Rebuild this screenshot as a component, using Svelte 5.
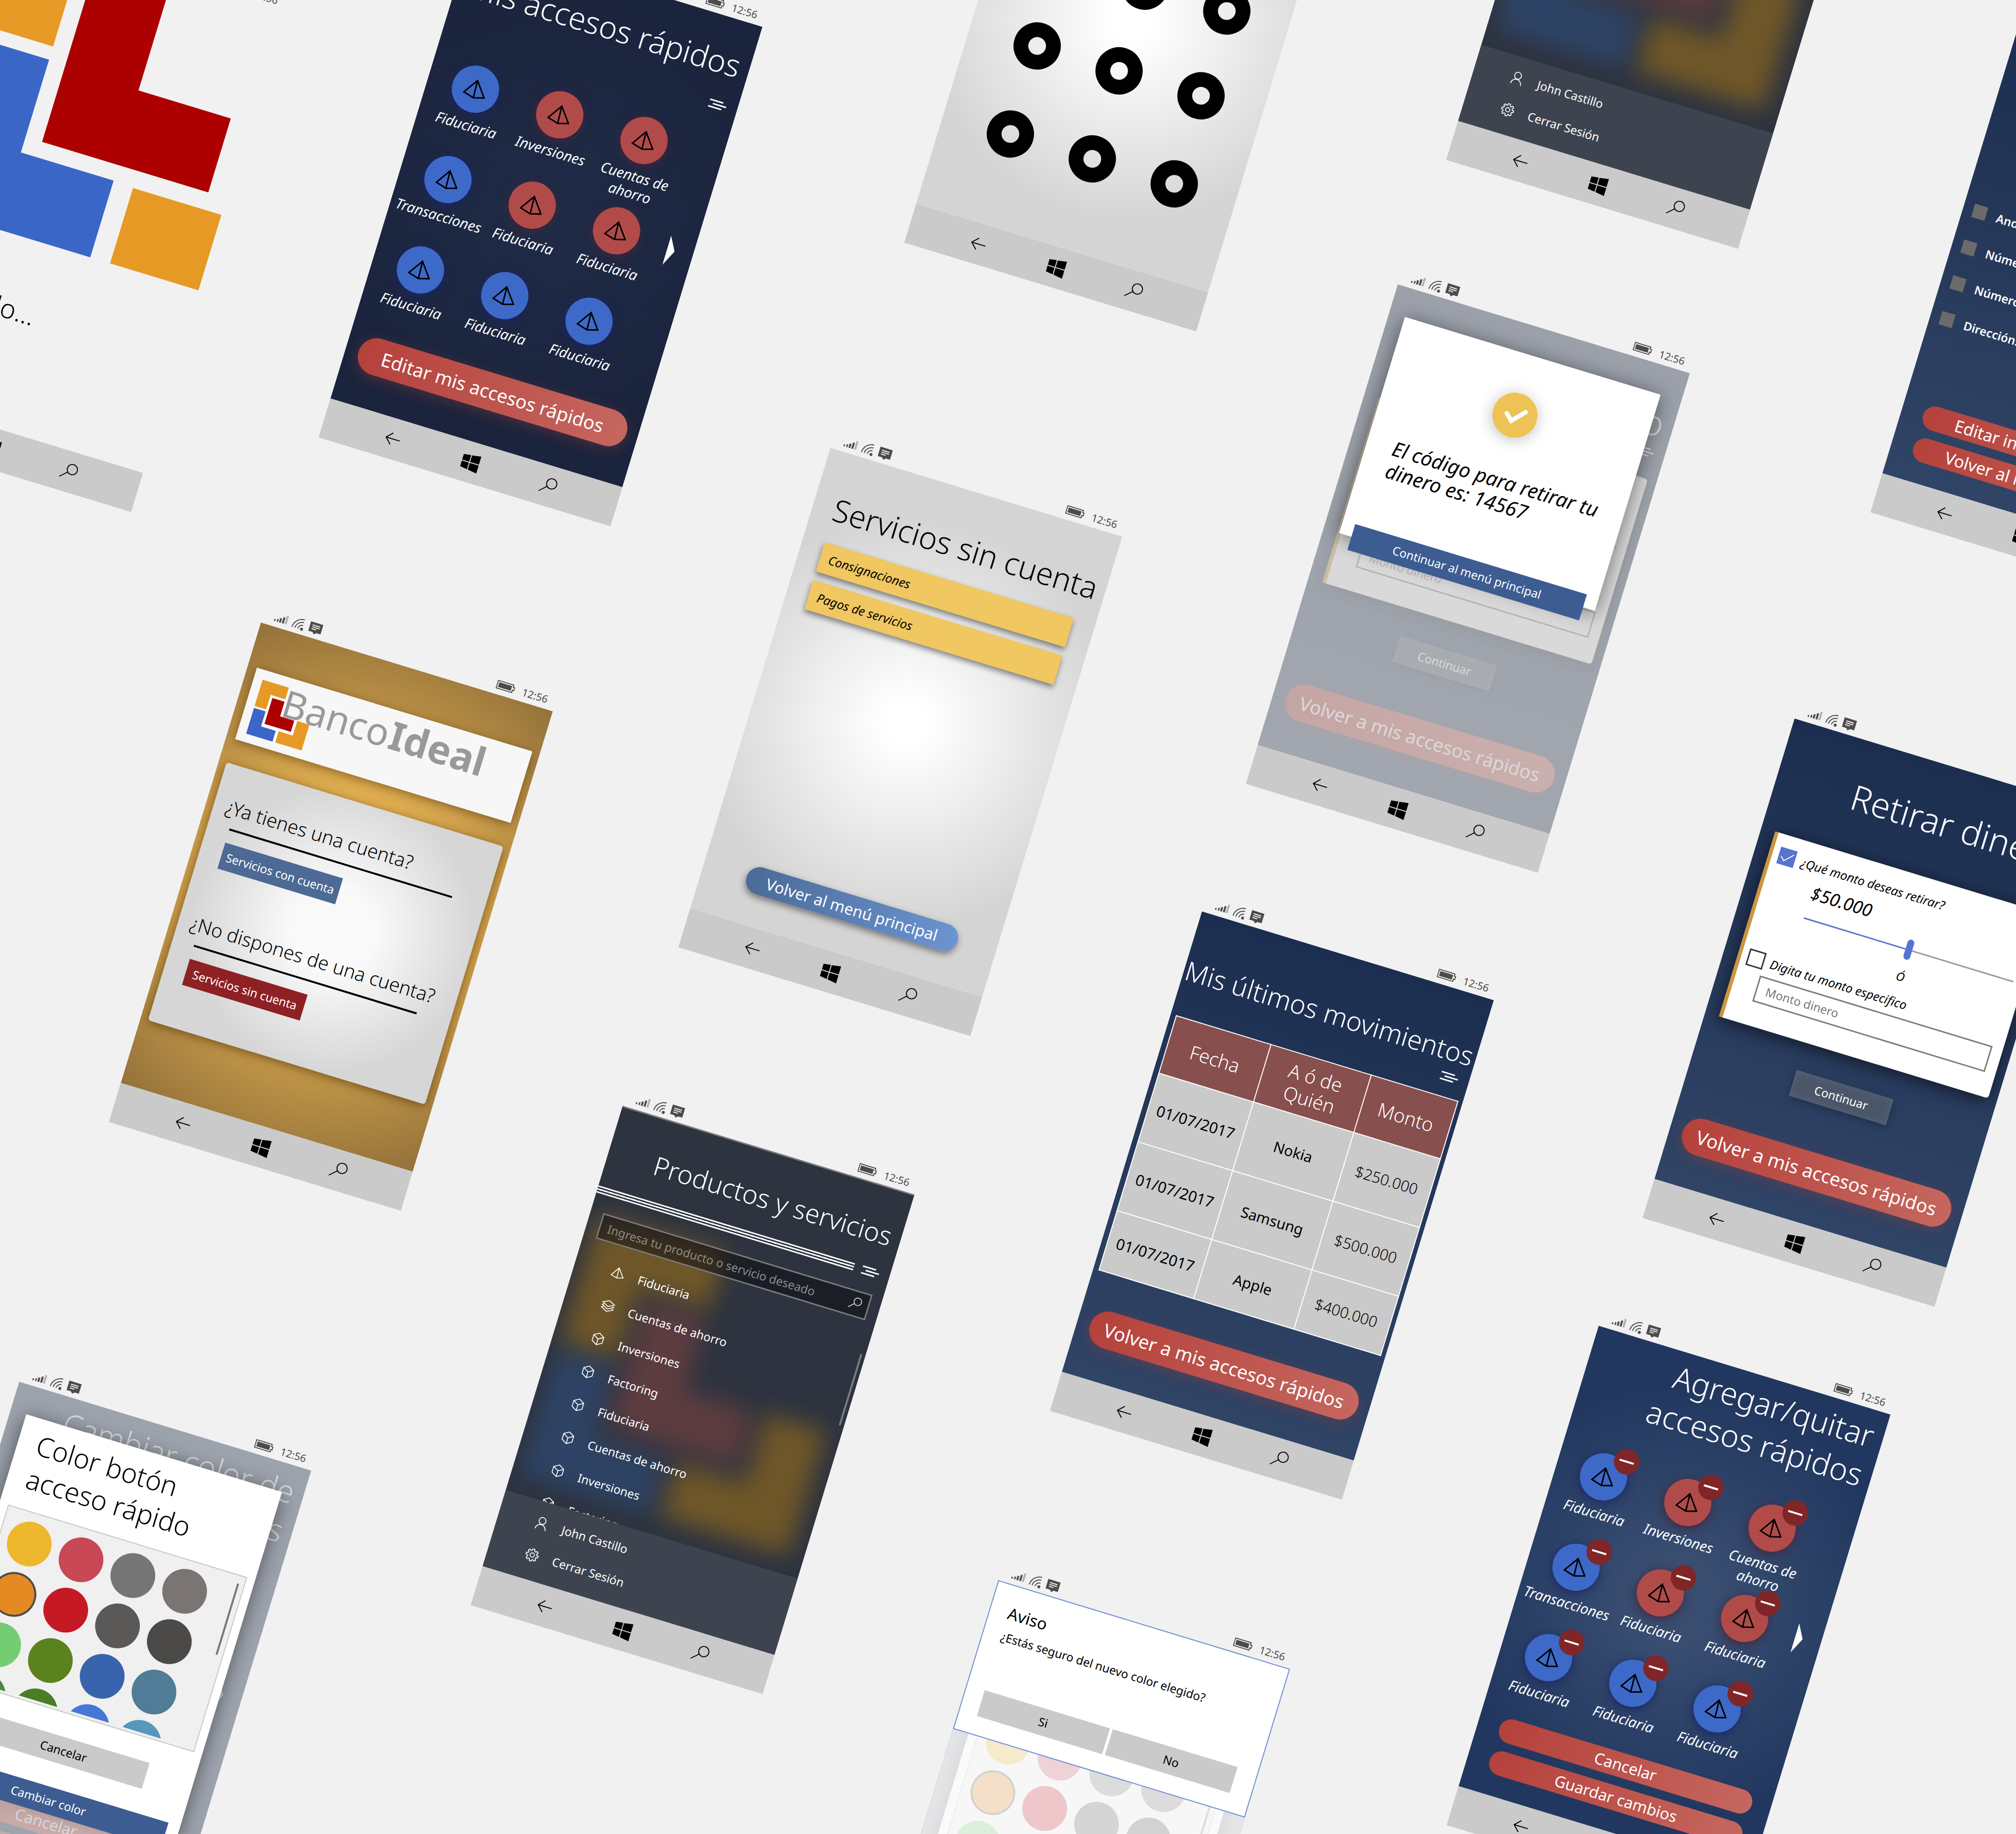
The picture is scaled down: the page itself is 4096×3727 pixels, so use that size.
<script>
  const phones = [
    { kind: 'loading', x: -18, y: -196 },
    { kind: 'shortcuts', x: 956, y: -167 },
    { kind: 'pattern', x: 2146, y: -563 },
    { kind: 'menu', x: 3247, y: -731, items: 5 },
    { kind: 'profile', x: 4109, y: -15 },
    { kind: 'code', x: 2840, y: 537 },
    { kind: 'services', x: 1687, y: 869 },
    { kind: 'home', x: 530, y: 1224 },
    { kind: 'withdraw', x: 3646, y: 1419 },
    { kind: 'movements', x: 2442, y: 1811 },
    { kind: 'menu', x: 1265, y: 2206, items: 8 },
    { kind: 'edit', x: 3248, y: 2653 },
    { kind: 'color', x: 39, y: 2767 },
    { kind: 'confirm', x: 2028, y: 3170 }
  ];

  const shortcuts = [
    { label: 'Fiduciaria', tone: 'blue' },
    { label: 'Inversiones', tone: 'red' },
    { label: 'Cuentas de\nahorro', tone: 'red' },
    { label: 'Transacciones', tone: 'blue' },
    { label: 'Fiduciaria', tone: 'red' },
    { label: 'Fiduciaria', tone: 'red' },
    { label: 'Fiduciaria', tone: 'blue' },
    { label: 'Fiduciaria', tone: 'blue' },
    { label: 'Fiduciaria', tone: 'blue' }
  ];

  const products = [
    { label: 'Fiduciaria', icon: 'pyramid' },
    { label: 'Cuentas de ahorro', icon: 'layers' },
    { label: 'Inversiones', icon: 'cube' },
    { label: 'Factoring', icon: 'cube' },
    { label: 'Fiduciaria', icon: 'cube' },
    { label: 'Cuentas de ahorro', icon: 'cube' },
    { label: 'Inversiones', icon: 'cube' },
    { label: 'Factoring', icon: 'cube' }
  ];

  const movements = [
    ['01/07/2017', 'Nokia', '$250.000'],
    ['01/07/2017', 'Samsung', '$500.000'],
    ['01/07/2017', 'Apple', '$400.000']
  ];

  const swatches = [
    '#edb82d', '#c84856', '#757575', '#7a7472',
    '#e58a22', '#c61926', '#5a5957', '#4c4a48',
    '#74cd72', '#5c821e', '#3864ad', '#507c97',
    '#4a8745', '#4a7d25', '#4577d6', '#5698ba'
  ];

  const profileFields = ['Andrés Castillo', 'Número de cuenta:', 'Número celular:', 'Dirección:'];
</script>

{#snippet logo(cls)}
  <svg class={cls} viewBox="0 0 118 115" preserveAspectRatio="none" aria-hidden="true">
    <path class="l-orange" d="M0 0H56V25H25V56H0Z" />
    <path class="l-blue" d="M0 60H25V92H56V115H0Z" />
    <path class="l-orange" d="M92 60H118V115H62V91H92Z" />
    <path class="l-edge" d="M25 25H61V56H91V90H25Z" />
    <path class="l-red" d="M30 30H56V61H86V85H30Z" />
  </svg>
{/snippet}

{#snippet pyramid(cls)}
  <svg class={cls} viewBox="0 0 48 48" fill="none" stroke="currentColor" stroke-width="3" aria-hidden="true">
    <path d="M23 6L3 36L25 42L46 36Z M23 6L25 42" />
  </svg>
{/snippet}

{#snippet hamburger()}
  <button class="hamburger" aria-label="Menú"><span></span><span></span><span></span></button>
{/snippet}

{#snippet lens(cls)}
  <svg class={cls} viewBox="0 0 40 40" fill="none" stroke="currentColor" stroke-width="2" aria-hidden="true">
    <circle cx="26" cy="13" r="11" /><path d="M18 21L3 35" />
  </svg>
{/snippet}

{#snippet shortcutGrid(editable)}
  <div class="pager">
    <ul class="shortcuts">
      {#each shortcuts as s}
        <li>
          <button class="tile {s.tone}" aria-label={s.label}>
            {@render pyramid('tile-icon')}
            {#if editable}<span class="badge"></span>{/if}
          </button>
          <span class="tile-label">{s.label}</span>
        </li>
      {/each}
    </ul>
    <svg class="next" viewBox="0 0 16 62" aria-hidden="true"><path fill="#fff" d="M0 0L16 29L0 62Z" /></svg>
  </div>
{/snippet}

{#snippet withdrawScreen()}
  <div class="screen navy">
    <h2 class="title huge">Retirar dinero</h2>
    <div class="menu-row near">{@render hamburger()}</div>
    <form class="money-card">
      <label class="option"><input type="checkbox" checked />¿Qué monto deseas retirar?</label>
      <div class="amount">$50.000</div>
      <input class="range" type="range" aria-label="Monto" min="0" max="100" value="50" />
      <div class="or">Ó</div>
      <label class="option"><input type="checkbox" />Digita tu monto especifico</label>
      <input class="money" type="text" placeholder="Monto dinero" aria-label="Monto dinero" />
    </form>
    <button class="glass">Continuar</button>
    <button class="pill big">Volver a mis accesos rápidos</button>
  </div>
{/snippet}

{#snippet colorScreen()}
  <div class="screen edit-bg">
    <h2 class="title two">Cambiar color de<br />accesos rápidos</h2>
    {@render shortcutGrid(false)}
    <div class="pill-stack">
      <button class="pill slim">Cancelar</button>
      <button class="pill slim">Guardar cambios</button>
    </div>
  </div>
  <div class="veil"></div>
  <div class="dialog">
    <h3 class="dialog-title">Color botón<br />acceso rápido</h3>
    <div class="palette">
      <div class="swatches">
        {#each swatches as c, i}
          <button class="swatch" class:chosen={i === 4} style="background:{c}" aria-label="Color {i + 1}"></button>
        {/each}
      </div>
      <span class="palette-bar"></span>
    </div>
    <button class="flat gray">Cancelar</button>
    <button class="flat royal">Cambiar color</button>
  </div>
{/snippet}

<main class="board">
  {#each phones as p}
    <section class="phone" style="left:{p.x}px;top:{p.y}px">
      <header class="status">
        <svg class="signal" viewBox="0 0 28 18" aria-hidden="true">
          <path fill="#4b4b4b" d="M0 14h3v4h-3zM6 12h3v6h-3zM11 9h4v9h-4zM17 5h4v13h-4z" /><path fill="#b0b0b0" d="M23 0h4v18h-4z" />
        </svg>
        <svg class="wifi" viewBox="0 0 26 26" fill="none" stroke="#4b4b4b" stroke-width="2" aria-hidden="true">
          <path d="M2 23A21 21 0 0 1 23 2M8 23A15 15 0 0 1 23 8M14 23A9 9 0 0 1 23 14" /><circle cx="22" cy="22" r="2" fill="#4b4b4b" />
        </svg>
        <svg class="note" viewBox="0 0 28 26" aria-hidden="true">
          <path fill="#4b4b4b" d="M1 1H27V21H18L14 25L10 21H1Z" /><path stroke="#f1f1f1" stroke-width="2" d="M6 7H22M6 11H22M6 15H16" />
        </svg>
        <span class="spring"></span>
        <svg class="battery" viewBox="0 0 38 18" aria-hidden="true">
          <path fill="none" stroke="#4b4b4b" stroke-width="2" d="M1 1H34V6H37V12H34V17H1Z" /><path fill="#4b4b4b" d="M4 4H31V14H4Z" />
        </svg>
        <time>12:56</time>
      </header>

      <div class="body">
        {#if p.kind === 'loading'}
          <div class="screen blank">
            <svg class="giant-logo" viewBox="0 0 620 640" aria-hidden="true">
              <path class="l-orange" d="M36 0H193V202H36Z" />
              <path class="l-blue" d="M36 230H193V427H390V590H36Z" />
              <path class="l-red" d="M228 40H385V237H581V394H228Z" />
              <path class="l-orange" d="M432 430H620V590H432Z" />
            </svg>
            <p class="loading">Cargando...</p>
          </div>
        {:else if p.kind === 'shortcuts'}
          <div class="screen night">
            <h2 class="title one">Mis accesos rápidos</h2>
            <div class="menu-row far">{@render hamburger()}</div>
            {@render shortcutGrid(false)}
            <button class="pill big">Editar mis accesos rápidos</button>
          </div>
        {:else if p.kind === 'pattern'}
          <div class="screen pearl">
            <div class="rings">
              {#each Array(9) as _, i}<button class="ring" aria-label="Punto {i + 1}"></button>{/each}
            </div>
          </div>
        {:else if p.kind === 'menu'}
          <div class="screen slate">
            {@render logo('ghost')}
            <h2 class="title products">Productos y servicios</h2>
            <div class="rule-row"><div class="rules"></div>{@render hamburger()}</div>
            <label class="search">
              <input type="text" placeholder="Ingresa tu producto o servicio deseado" aria-label="Ingresa tu producto o servicio deseado" />
              {@render lens('search-icon')}
            </label>
            <div class="list-wrap">
              <ul class="list">
                {#each products.slice(0, p.items) as item}
                  <li>
                    {#if item.icon === 'pyramid'}
                      {@render pyramid('list-icon')}
                    {:else if item.icon === 'layers'}
                      <svg class="list-icon" viewBox="0 0 32 32" fill="none" stroke="currentColor" stroke-width="2" aria-hidden="true">
                        <path d="M16 3L30 10L16 17L2 10ZM6 14L2 16L16 23L30 16L26 14M6 20L2 22L16 29L30 22L26 20" />
                      </svg>
                    {:else}
                      <svg class="list-icon" viewBox="0 0 32 32" fill="none" stroke="currentColor" stroke-width="2" aria-hidden="true">
                        <path d="M16 2L28 9V23L16 30L4 23V9ZM4 9L16 16L28 9M16 16V30" />
                      </svg>
                    {/if}
                    <a href="#producto">{item.label}</a>
                  </li>
                {/each}
              </ul>
              <span class="list-bar"></span>
            </div>
            <div class="account">
              <a href="#perfil">
                <svg class="list-icon" viewBox="0 0 32 32" fill="none" stroke="currentColor" stroke-width="2" aria-hidden="true">
                  <circle cx="16" cy="10" r="8" /><path d="M4 31A12 12 0 0 1 28 31" />
                </svg>
                John Castillo
              </a>
              <a href="#salir">
                <svg class="list-icon" viewBox="0 0 32 32" fill="none" stroke="currentColor" stroke-width="2" aria-hidden="true">
                  <circle cx="16" cy="16" r="5" />
                  <path d="M13.500 2H18.500L19 6L22 7.300L25.200 5L28 8.300L25.300 11.500L26.500 14L30 14.500V18.500L26 19.500L25 22L27.200 25.300L23.800 28.300L20.500 26L18.500 27L17.500 30.500H13.500L12.700 26.500L10 25.500L6.800 27.500L4 24.500L6.200 21L5 18.500L1.500 17.500V13.500L5.300 12.800L6.400 10.200L4.200 7L7.300 4.200L10.500 6.500L12.800 5.500Z" />
                </svg>
                Cerrar Sesión
              </a>
            </div>
          </div>
        {:else if p.kind === 'profile'}
          <div class="screen navy profile">
            <ul class="fields">
              {#each profileFields as f}<li><span class="mark"></span>{f}</li>{/each}
            </ul>
            <div class="pill-stack">
              <button class="pill slim">Editar información básica</button>
              <button class="pill slim">Volver al menú principal</button>
            </div>
          </div>
        {:else if p.kind === 'withdraw'}
          {@render withdrawScreen()}
        {:else if p.kind === 'code'}
          {@render withdrawScreen()}
          <div class="veil"></div>
          <div class="dialog">
            <svg class="tick" viewBox="0 0 92 92" aria-hidden="true">
              <circle cx="46" cy="46" r="46" fill="#eec355" />
              <path d="M29 47L42 59L65 34" fill="none" stroke="#fff" stroke-width="9" stroke-linecap="round" />
            </svg>
            <p class="code">El código para retirar tu<br />dinero es: 14567</p>
            <button class="flat royal">Continuar al menú principal</button>
          </div>
        {:else if p.kind === 'services'}
          <div class="screen pearl">
            <h2 class="title dark">Servicios sin cuenta</h2>
            <div class="bars">
              <button class="bar">Consignaciones</button>
              <button class="bar">Pagos de servicios</button>
            </div>
            <button class="pill steel">Volver al menú principal</button>
          </div>
        {:else if p.kind === 'home'}
          <div class="screen gold">
            <div class="banner">
              {@render logo('brand-logo')}
              <h2 class="brand">Banco<b>Ideal</b></h2>
            </div>
            <div class="welcome">
              <div class="ask">
                <p>¿Ya tienes una cuenta?</p>
                <hr />
                <button class="go blue-go">Servicios con cuenta</button>
              </div>
              <div class="ask">
                <p>¿No dispones de una cuenta?</p>
                <hr />
                <button class="go red-go">Servicios sin cuenta</button>
              </div>
            </div>
          </div>
        {:else if p.kind === 'movements'}
          <div class="screen navy">
            <h2 class="title moves">Mis últimos movimientos</h2>
            <div class="menu-row near">{@render hamburger()}</div>
            <table>
              <thead><tr><th>Fecha</th><th>A ó de Quién</th><th>Monto</th></tr></thead>
              <tbody>
                {#each movements as row}
                  <tr><td>{row[0]}</td><td>{row[1]}</td><td class="sum">{row[2]}</td></tr>
                {/each}
              </tbody>
            </table>
            <button class="pill big">Volver a mis accesos rápidos</button>
          </div>
        {:else if p.kind === 'edit'}
          <div class="screen edit-bg">
            <h2 class="title two">Agregar/quitar<br />accesos rápidos</h2>
            {@render shortcutGrid(true)}
            <div class="pill-stack">
              <button class="pill slim">Cancelar</button>
              <button class="pill slim">Guardar cambios</button>
            </div>
          </div>
        {:else if p.kind === 'color'}
          {@render colorScreen()}
        {:else}
          {@render colorScreen()}
          <div class="fade"></div>
          <div class="alert">
            <h3>Aviso</h3>
            <p>¿Estás seguro del nuevo color elegido?</p>
            <div class="answers"><button>Si</button><button>No</button></div>
          </div>
        {/if}
      </div>

      <nav class="keys">
        <button aria-label="Atrás">
          <svg class="back" viewBox="0 0 32 32" fill="none" stroke="#000" stroke-width="2" aria-hidden="true"><path d="M31 16H2M14 4L2 16L14 28" /></svg>
        </button>
        <button aria-label="Inicio">
          <svg class="win" viewBox="0 0 36 36" aria-hidden="true"><path d="M0 5L15 3V17H0ZM17 3L36 0V17H17ZM0 19H15V33L0 31ZM17 19H36V36L17 33Z" /></svg>
        </button>
        <button aria-label="Buscar">{@render lens('find')}</button>
      </nav>
    </section>
  {/each}
</main>

<style>
  :global(body) { margin: 0; background: #f1f1f1; }
  .board {
    position: relative;
    width: 100%;
    height: 100vh;
    overflow: hidden;
    background: #f1f1f1;
    font-family: "Noto Sans", "Open Sans", sans-serif;
    font-size: 24px;
    color: #fff;
  }
  h2, h3, p, ul { margin: 0; padding: 0; font-weight: 400; list-style: none; }
  button { border: 0; padding: 0; margin: 0; font: inherit; color: inherit; background: none; white-space: nowrap; }
  input { font: inherit; box-sizing: border-box; margin: 0; }
  a { color: inherit; text-decoration: none; }
  svg { display: block; flex: none; }

  .phone {
    position: absolute;
    width: 620px;
    transform-origin: 0 41px;
    transform: rotate(16.92deg);
  }
  .status {
    display: flex;
    align-items: center;
    gap: 9px;
    height: 41px;
    box-sizing: border-box;
    padding: 0 17px 0 24px;
    color: #4b4b4b;
    font-size: 21px;
  }
  .signal { width: 28px; height: 18px; }
  .wifi { width: 26px; height: 26px; }
  .note { width: 28px; height: 26px; }
  .battery { width: 38px; height: 18px; margin-right: 7px; }
  .spring { flex: 1; }
  .body { position: relative; height: 978px; overflow: hidden; }
  .screen {
    position: relative;
    display: flex;
    flex-direction: column;
    height: 978px;
    box-sizing: border-box;
    overflow: hidden;
  }
  .keys {
    display: grid;
    grid-template-columns: repeat(3, 165px);
    justify-content: center;
    height: 83px;
    background: #cacaca;
    color: #000;
  }
  .keys button { display: grid; place-items: center; }
  .back { width: 32px; height: 32px; }
  .win { width: 36px; height: 36px; }
  .find { width: 38px; height: 38px; }

  .night { background: radial-gradient(circle 460px at 50% 50%, #1f2b47, #1b243d); padding-bottom: 70px; }
  .navy { background: linear-gradient(#1c2e50, #304466); padding-bottom: 70px; }
  .profile { padding-bottom: 44px; }
  .edit-bg { background: radial-gradient(circle 440px at 50% 50%, #384d70 20%, #22375f); padding-bottom: 44px; }
  .pearl { background: radial-gradient(circle 420px at 50% 50%, #fff 10%, #d4d4d4); padding-bottom: 66px; color: #000; }
  .gold { background: radial-gradient(circle 580px at 50% 50%, #eab653 28%, #93713a); padding: 90px 16px 0; color: #000; }
  .slate { background: #2d333f; border-top: 3px solid #7a7a7a; }
  .blank { color: #000; }

  .l-orange { fill: #e69a25; }
  .l-blue { fill: #3a66c8; }
  .l-red { fill: #ad0000; }
  .l-edge { fill: #fff; }

  .title { font-weight: 300; white-space: nowrap; text-align: right; padding-right: 20px; }
  .one, .two { font-size: 63px; line-height: 82px; }
  .one { padding-top: 50px; }
  .two { padding-top: 12px; margin-bottom: 67px; }
  .huge { font-size: 71px; line-height: 90px; padding-top: 71px; }
  .moves { font-size: 54px; line-height: 74px; padding-top: 85px; padding-right: 7px; }
  .products { position: relative; font-size: 53px; line-height: 70px; padding-top: 58px; }
  .dark { font-size: 63px; line-height: 80px; padding: 76px 18px 31px 0; }

  .menu-row { display: flex; justify-content: flex-end; height: 24px; align-items: center; padding-right: 23px; }
  .near { margin: 5px 0 0; }
  .far { margin: 34px 0 53px; }
  .hamburger { display: flex; flex-direction: column; gap: 4px; width: 36px; }
  .hamburger span { width: 28px; height: 3px; background: #fff; }
  .hamburger span:nth-child(2) { align-self: flex-end; }

  .pager { display: flex; align-items: flex-start; padding-left: 9px; }
  .shortcuts { display: grid; grid-template-columns: repeat(3, 179px); grid-template-rows: 192px 192px 140px; }
  .shortcuts li { display: flex; flex-direction: column; align-items: center; gap: 9px; }
  .tile { position: relative; display: grid; place-items: center; width: 96px; height: 96px; border-radius: 50%; color: #000; flex: none; }
  .blue { background: #3d6ac8; box-shadow: 0 4px 20px #1c2566; }
  .red { background: #b14b4a; box-shadow: 0 4px 20px #45253a; }
  .tile-icon { width: 48px; height: 48px; }
  .tile-label { padding-left: 7px; font-style: italic; font-size: 29px; line-height: 35px; white-space: pre; text-align: center; }
  .badge { position: absolute; top: -21px; right: -14px; width: 52px; height: 52px; border-radius: 50%; background: #802628; display: grid; place-items: center; }
  .badge::after { content: ""; width: 30px; height: 4px; background: #fff; }
  .next { width: 16px; height: 62px; margin: 217px 0 0 20px; }

  .pill {
    margin-top: auto;
    border-radius: 40px;
    background: linear-gradient(90deg, #b5413b, #c5675f);
    text-align: center;
    flex: none;
  }
  .pill.big { height: 76px; margin-left: 27px; margin-right: 24px; font-size: 38px; box-shadow: 0 6px 26px rgba(150, 60, 60, .4); }
  .pill-stack { display: flex; flex-direction: column; gap: 18px; margin: auto 39px 0 45px; }
  .pill.slim { height: 50px; margin: 0; font-size: 32px; line-height: 46px; }
  .profile .pill.slim { font-size: 34px; text-align: left; padding-left: 68px; }
  .pill.steel { height: 56px; width: 448px; margin-left: 91px; font-size: 32px; color: #fff; background: linear-gradient(90deg, #4b6b96, #6b94d2); box-shadow: 0 6px 14px rgba(0, 0, 0, .45); }

  .rings { display: grid; grid-template-columns: repeat(3, 174px); grid-template-rows: 180px 187px 96px; justify-items: center; margin: 372px 0 0 55px; }
  .ring { width: 96px; height: 96px; box-sizing: border-box; border: 30px solid #000; border-radius: 50%; }

  .giant-logo { width: 620px; height: 640px; }
  .loading { font-weight: 300; font-size: 54px; line-height: 70px; margin: 62px 0 0 36px; }

  .bars { display: flex; flex-direction: column; gap: 18px; margin: 0 46px 0 45px; }
  .bar { height: 62px; padding-left: 18px; background: #f0c760; text-align: left; font-style: italic; font-size: 25px; box-shadow: 0 6px 12px rgba(0, 0, 0, .45); }

  .banner { display: flex; align-items: flex-start; height: 152px; margin-left: 3px; background: #f7f7f7; box-shadow: 0 4px 20px rgba(70, 40, 0, .5); }
  .brand-logo { width: 118px; height: 115px; margin: 20px 0 0 18px; }
  .brand { font-size: 77px; line-height: 90px; margin: 4px 0 0 -64px; color: #999; white-space: nowrap; }
  .brand b { margin-left: 2px; font-size: 80px; }
  .welcome { height: 548px; box-sizing: border-box; margin-top: 50px; padding: 61px 0 0 25px; display: flex; flex-direction: column; gap: 96px; border-radius: 6px; background: radial-gradient(circle 290px at 52% 48%, #f9f9f9 30%, #d6d6d6); box-shadow: 0 4px 20px rgba(70, 40, 0, .6); }
  .ask { display: flex; flex-direction: column; align-items: flex-start; }
  .ask p { font-size: 39px; line-height: 48px; font-weight: 300; white-space: nowrap; }
  .ask hr { width: 473px; height: 4px; margin: 18px 0 26px 20px; border: 0; background: #000; }
  .go { width: 250px; height: 55px; margin-left: 20px; color: #fff; font-size: 24px; }
  .blue-go { background: #4c6a94; }
  .red-go { background: #8e2124; }

  .ghost { position: absolute; left: 18px; top: 222px; width: 570px; height: 552px; opacity: .36; filter: blur(24px); }
  .ghost .l-edge { fill: none; }
  .ghost .l-orange { fill: #e29600; }
  .ghost .l-blue { fill: #3262ab; }
  .ghost .l-red { fill: #b34d3f; }
  .rule-row { position: relative; display: flex; align-items: center; gap: 17px; height: 24px; margin-top: 33px; }
  .rules { width: 545px; height: 9px; border-top: 3px solid #fff; border-bottom: 3px solid #fff; background: linear-gradient(transparent 3px, #fff 3px, #fff 6px, transparent 6px); }
  .search { position: relative; display: flex; align-items: center; height: 54px; box-sizing: border-box; margin: 32px 22px 19px 26px; padding: 0 12px 0 15px; border: 3px solid #7b7b7b; background: rgba(10, 10, 14, .5); }
  .search input { flex: 1; border: 0; background: none; color: #fff; padding: 0; }
  .search input::placeholder { color: #8b8b8b; opacity: 1; }
  .search-icon { width: 28px; height: 28px; }
  .list-wrap { position: relative; display: flex; flex: 1; min-height: 0; overflow: hidden; justify-content: space-between; padding-right: 7px; }
  .list li, .account a { display: flex; align-items: center; gap: 29px; padding-left: 76px; }
  .list li { height: 70px; }
  .list-icon { width: 28px; height: 28px; }
  .list-bar { width: 4px; height: 151px; margin-top: 49px; background: #7b7b7b; }
  .account { position: relative; height: 162px; box-sizing: border-box; padding-top: 10px; background: #3e444f; }
  .account a { height: 67px; }

  .fields { margin-top: 375px; font-size: 24px; font-weight: 600; }
  .fields li { display: flex; align-items: center; gap: 22px; height: 76px; padding-left: 21px; white-space: nowrap; }
  .mark { width: 28px; height: 28px; background: #6b6b6b; flex: none; }

  .money-card { height: 393px; box-sizing: border-box; margin: 41px 19px 0 29px; padding: 26px 22px 0 13px; border-left: 8px solid #cc9640; border-radius: 0 6px 6px 0; background: #fff; color: #000; display: flex; flex-direction: column; font-style: italic; box-shadow: 0 6px 36px rgba(0, 0, 0, .6); }
  .option { display: flex; align-items: center; gap: 13px; height: 35px; font-size: 25px; white-space: nowrap; }
  .option input { appearance: none; width: 35px; height: 35px; border: 3px solid #333; background: #fff; }
  .option input:checked { border: 0; background: #5674cf url("data:image/svg+xml,%3Csvg xmlns='http://www.w3.org/2000/svg' viewBox='0 0 35 35'%3E%3Cpath d='M5 18L13 26L30 9' fill='none' stroke='white' stroke-width='2'/%3E%3C/svg%3E"); }
  .amount { font-size: 36px; line-height: 40px; margin: 17px 0 12px 86px; }
  .range { appearance: none; width: 445px; height: 42px; margin-left: 86px; background: linear-gradient(90deg, #5674cf 50%, #999 50%) center / 100% 3px no-repeat; }
  .range::-webkit-slider-thumb { appearance: none; width: 14px; height: 42px; border-radius: 7px; background: #5674cf; }
  .or { width: 445px; margin: 21px 0 19px 86px; line-height: 30px; text-align: center; }
  .money { height: 55px; margin: 12px 0 0 35px; padding: 0 18px; border: 3px solid #7a7a7a; background: #fff; font-style: normal; }
  .money::placeholder { color: #7a7a7a; opacity: 1; }
  .glass { width: 206px; height: 55px; margin: 58px 0 0 212px; background: #4b5768; box-shadow: inset 0 0 16px #56667c, 0 4px 16px rgba(0, 0, 0, .25); }

  table { width: 600px; margin: 29px 0 0 11px; border-collapse: collapse; table-layout: fixed; color: #000; font-size: 30px; }
  th, td { border: 2px solid #fff; padding: 0; text-align: center; font-weight: 400; background: #cacaca; }
  th { height: 122px; padding: 0 24px; box-sizing: border-box; background: #874f4d; color: #fff; font-size: 39px; line-height: 46px; font-weight: 300; }
  th:first-child { width: 201px; }
  th:nth-child(2) { width: 213px; }
  tbody tr { height: 146px; }
  tbody tr:last-child { height: 126px; }
  td:first-child { font-size: 31px; }
  .sum { font-weight: 300; font-size: 31px; }

  .veil { position: absolute; inset: 0; background: rgba(203, 203, 203, .73); }
  .dialog { position: absolute; left: 33px; top: 59px; width: 543px; display: flex; flex-direction: column; align-items: center; background: #fff; color: #000; box-shadow: 0 6px 40px rgba(0, 0, 0, .5); }
  .tick { width: 92px; height: 92px; margin-top: 80px; border-radius: 50%; box-shadow: 0 4px 30px rgba(0, 0, 0, .25); }
  .code { align-self: flex-start; margin: 66px 0 100px 54px; font-style: italic; font-size: 41px; line-height: 47px; white-space: nowrap; }
  .flat { height: 55px; }
  .royal { width: 492px; margin-bottom: -28px; background: #3d5c92; color: #fff; }
  .gray { width: 348px; margin: 47px 0 50px; background: #cacaca; }
  .dialog-title { align-self: flex-start; margin: 16px 0 28px 39px; font-weight: 300; font-size: 55px; line-height: 71px; }
  .palette { position: relative; width: 508px; height: 372px; box-sizing: border-box; border: 2px solid #c9c9c9; background: #f0f0f0; }
  .swatches { display: grid; grid-template-columns: repeat(4, 110px); grid-auto-rows: 107px; justify-items: center; height: 346px; padding: 17px 0 0 8px; overflow: hidden; }
  .swatch { width: 91px; height: 91px; border-radius: 50%; }
  .chosen { box-shadow: inset 0 0 0 4px #4d4d4d; }
  .palette-bar { position: absolute; top: 16px; right: 10px; width: 4px; height: 151px; background: #777; }

  .fade { position: absolute; inset: 0; background: rgba(248, 248, 248, .78); }
  .alert { position: absolute; inset: 0 0 auto; height: 316px; box-sizing: border-box; padding: 36px 42px 0 37px; border: 2px solid #6a8bd0; background: #fff; color: #000; }
  .alert h3 { font-size: 33px; line-height: 40px; }
  .alert p { line-height: 34px; margin-top: 12px; white-space: nowrap; }
  .answers { display: grid; grid-template-columns: 1fr 1fr; gap: 6px; margin-top: 98px; }
  .answers button { height: 55px; background: #cacaca; }
</style>
